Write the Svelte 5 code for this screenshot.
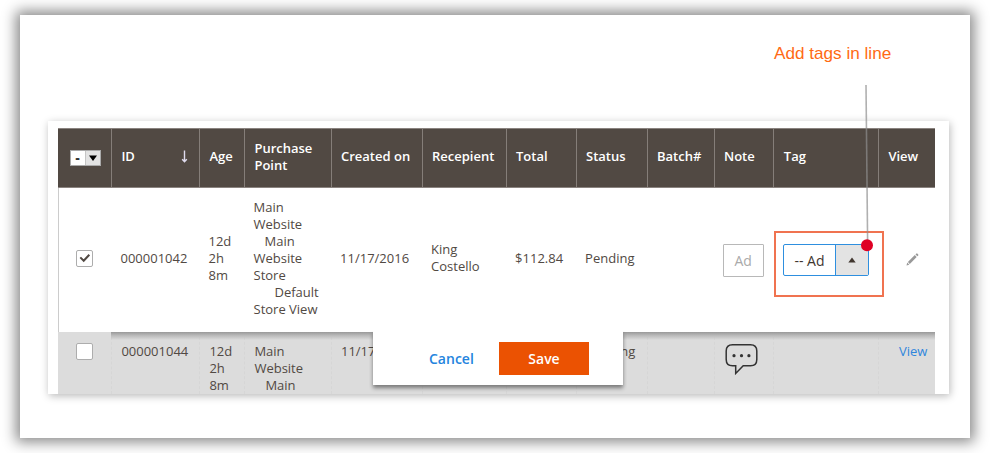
<script>
  const columns = ['ID', 'Age', 'Purchase Point', 'Created on', 'Recepient', 'Total', 'Status', 'Batch#', 'Note', 'Tag', 'View'];
</script>

<main>
  <section class="panel">
    <div class="card">
      <div class="table">
        <div class="row head">
          <div class="cell check">
            <span class="picker"><b>-</b><i><svg width="10" height="7" viewBox="0 0 10 7"><path d="M1 .5h8L5 6z" /></svg></i></span>
          </div>
          {#each columns as name}
            <div class="cell">
              <span>{name}</span>
              {#if name === 'ID'}
                <svg class="sort" width="7" height="13" viewBox="0 0 7 13"><path d="M3.5.5v11M1.2 9.2l2.3 2.6 2.3-2.6" /></svg>
              {/if}
            </div>
          {/each}
        </div>

        <div class="row active">
          <div class="cell check">
            <span class="box"><svg width="12" height="10" viewBox="0 0 12 10"><path d="M1.3 4.4l3.4 3.3 5.6-6" /></svg></span>
          </div>
          <div class="cell">000001042</div>
          <div class="cell">12d<br />2h<br />8m</div>
          <div class="cell"><div class="store">Main<br />Website<br /><span class="in1">Main</span><br />Website<br />Store<br /><span class="in2">Default</span><br />Store View</div></div>
          <div class="cell">11/17/2016</div>
          <div class="cell">King<br />Costello</div>
          <div class="cell">$112.84</div>
          <div class="cell">Pending</div>
          <div class="cell"></div>
          <div class="cell"><span class="note">Ad</span></div>
          <div class="cell tagcell">
            <div class="highlight">
              <div class="select"><span>-- Ad</span><i><svg width="8" height="6" viewBox="0 0 8 6"><path d="M.3 5.5h7.4L4 .4z" /></svg></i></div>
            </div>
          </div>
          <div class="cell pen">
            <svg width="13" height="13" viewBox="0 0 13 13"><path d="M.5 12.5l.7-2.9 2.1 2.2zM1.9 9l6.9-6.9 1.9 1.9-6.9 6.9zM9.5 1.4l.8-.8q.5-.4 1 0l.9.9q.4.5 0 1l-.8.8z" /></svg>
          </div>
        </div>

        <div class="row next">
          <div class="cell check"><span class="box"></span></div>
          <div class="cell">000001044</div>
          <div class="cell">12d<br />2h<br />8m</div>
          <div class="cell"><div>Main<br />Website<br /><span class="in1">Main</span></div></div>
          <div class="cell">11/17/2016</div>
          <div class="cell"></div>
          <div class="cell"></div>
          <div class="cell">Pending</div>
          <div class="cell"></div>
          <div class="cell bubble">
            <svg width="34" height="34" viewBox="0 0 34 34">
              <path d="M7.5 1.7h18q6.3 0 6.3 6.3v8.5q0 6.3-6.3 6.3h-7.3l-7.5 7.7v-7.7H7.5q-6.3 0-6.3-6.3V8q0-6.3 6.3-6.3z" />
              <circle cx="9" cy="12.7" r="1.6" /><circle cx="16.5" cy="12.7" r="1.6" /><circle cx="23.9" cy="12.7" r="1.6" />
            </svg>
          </div>
          <div class="cell"></div>
          <div class="cell link">View</div>
          <div class="shade"></div>
          <div class="actions"><span class="cancel">Cancel</span><span class="save">Save</span></div>
        </div>
      </div>
    </div>
  </section>

  <span class="callout">Add tags in line</span>
  <svg class="pointer" width="16" height="168" viewBox="0 0 16 168">
    <path d="M7 0L8.6 156" />
    <circle cx="8" cy="160.3" r="6" />
  </svg>
</main>

<style>
  :global(body) { background: #fff; }
  main {
    position: relative;
    box-sizing: border-box;
    width: 990px;
    height: 453px;
    padding: 15px 20px;
    overflow: hidden;
    font: 13px/17px 'Open Sans', sans-serif;
    color: #514943;
  }
  .panel {
    box-sizing: border-box;
    height: 423px;
    padding: 106px 21px 0 28px;
    background: #fff;
    box-shadow: 0 0 13px 4px rgba(0, 0, 0, .47);
  }
  .card {
    box-sizing: border-box;
    height: 273px;
    padding: 7px 14px 0 10px;
    background: #fff;
    box-shadow: 1px 2px 8px rgba(0, 0, 0, .28);
  }
  .table { height: 266px; overflow: hidden; }
  .row {
    position: relative;
    display: grid;
    grid-template-columns: 53px 88px 45px 86.6px 91px 84px 70px 71px 67px 59.8px 104.6px 57px;
    box-sizing: border-box;
  }
  .cell {
    display: flex;
    align-items: center;
    box-sizing: border-box;
    padding-left: 9.4px;
  }
  .check { justify-content: center; padding: 0; }
  .head {
    height: 60px;
    border-top: 1px solid #8a837f;
    border-bottom: 1px solid #8a837f;
    background: #514943;
    color: #fff;
    font-weight: 600;
    line-height: 17px;
  }
  .head .cell { padding-bottom: 3px; border-left: 1px solid #857e79; }
  .head .cell:first-child { border-left-color: #514943; padding-bottom: 0; }
  .sort { margin: 0 11px 0 auto; fill: none; stroke: #e0dcef; stroke-width: 1.4; }
  .picker { display: flex; box-sizing: border-box; width: 31px; height: 16px; border: 1px solid #aaa; background: #fff; color: #333; line-height: 13px; }
  .picker b { width: 14px; text-align: center; }
  .picker i { display: flex; flex: 1; align-items: center; justify-content: center; border-left: 1px solid #c5c5c5; background: #e3e3e3; }
  .active { height: 144px; border-left: 1px solid #ccc; background: #fff; }
  .active .cell { padding-left: 8.5px; padding-bottom: 4px; }
  .active .check { padding: 0 2px 4px 0; }
  .box { display: flex; align-items: center; justify-content: center; box-sizing: border-box; width: 17px; height: 17px; border: 1px solid #adadad; border-radius: 2px; background: #fff; }
  .box svg { fill: none; stroke: #514943; stroke-width: 2; }
  .in1 { padding-left: 11px; }
  .in2 { padding-left: 21px; }
  .note { display: flex; align-items: center; justify-content: center; box-sizing: border-box; width: 41px; height: 33px; margin: 4px 0 0 -.5px; border: 1px solid #b8b8b8; border-radius: 1px; color: #aaa; font-size: 14px; }
  .active .tagcell { padding: 8px 0 0 0; }
  .highlight { display: flex; flex: none; box-sizing: border-box; width: 110px; height: 66px; margin-left: -.4px; padding: 11px 0 0 7px; border: 2px solid #f07350; }
  .select { display: flex; box-sizing: border-box; width: 86px; height: 32px; border: 1px solid #2e8fdf; border-radius: 2px; font-size: 14px; color: #41362f; }
  .select span { display: flex; align-items: center; justify-content: center; width: 51px; }
  .select i { display: flex; flex: 1; align-items: center; justify-content: center; border-left: 1px solid #2e8fdf; background: #e3e3e3; }
  .select i svg { fill: #41362f; }
  .active .pen { padding: 0 0 2px 27px; }
  .pen svg { fill: #999; }
  .next { height: 62px; background: #dcdcdc; }
  .next .cell { align-items: flex-start; padding-top: 11px; border-left: 1px dashed #d6d6d6; }
  .next .check { padding-right: 1px; border-left-color: #dcdcdc; }
  .next .bubble { padding: 11px 0 0 10.4px; }
  .bubble svg { fill: none; stroke: #333; stroke-width: 1.5; }
  .bubble circle { fill: #333; stroke: none; }
  .next .link { padding-left: 20px; color: #2f86dd; }
  .shade { position: absolute; inset: 0 0 auto 53px; height: 8px; background: linear-gradient(#999, #bbb 45%, rgba(220, 220, 220, 0)); }
  .actions {
    position: absolute;
    top: -1px;
    left: 315px;
    display: flex;
    align-items: center;
    box-sizing: border-box;
    width: 250px;
    height: 54px;
    padding: 1px 0 0 56px;
    background: #fff;
    box-shadow: 0 3px 4px rgba(0, 0, 0, .45);
    clip-path: inset(0 -4px -10px -4px);
    font-weight: 600;
    font-size: 14px;
  }
  .cancel { width: 70px; color: #2484de; }
  .save { display: flex; align-items: center; justify-content: center; width: 90px; height: 33px; background: #eb5202; color: #fff; }
  .callout { position: absolute; left: 774px; top: 43px; color: #ff6a13; font: 17.15px/20px 'Liberation Sans', Arial, sans-serif; white-space: nowrap; }
  .pointer { position: absolute; left: 859px; top: 85px; }
  .pointer path { stroke: #8e8e8e; stroke-opacity: .7; stroke-width: 1.6; }
  .pointer circle { fill: #df0024; }
</style>
